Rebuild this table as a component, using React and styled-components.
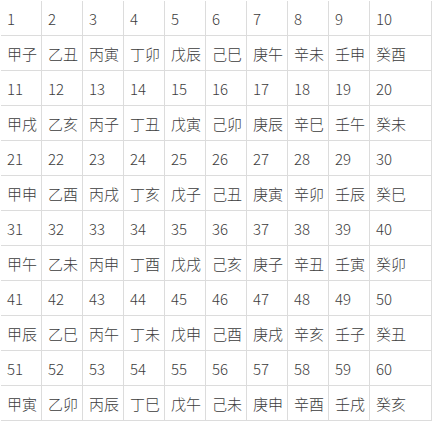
import React from "react";
import styled, { createGlobalStyle } from "styled-components";

const Global = createGlobalStyle`
  html, body { margin: 0; padding: 0; background: #fff; }
  body { font-family: "Noto Sans CJK SC", "Noto Sans", sans-serif; }
`;

const Table = styled.div`
  display: grid;
  grid-template-columns: repeat(9, 41px) 1fr;
  grid-auto-rows: 35px;
  width: 432px;
  box-sizing: border-box;
  padding: 1px 0 0 1px;
`;

const Cell = styled.div`
  box-sizing: border-box;
  border-right: 1px solid #dcdcdc;
  border-bottom: 1px solid #dcdcdc;
  display: flex;
  align-items: center;
  padding-left: 6px;
  font-size: 15px;
  font-weight: 300;
  color: #3c3c3c;
  white-space: nowrap;
  overflow: hidden;
`;

const stems = "甲乙丙丁戊己庚辛壬癸";
const branches = "子丑寅卯辰巳午未申酉戌亥";

const rows = [];
for (let r = 0; r < 6; r++) {
  const nums = [];
  const names = [];
  for (let c = 0; c < 10; c++) {
    const i = r * 10 + c;
    nums.push(String(i + 1));
    names.push(stems[i % 10] + branches[i % 12]);
  }
  rows.push(nums, names);
}

export default function App() {
  return (
    <>
      <Global />
      <Table>
        {rows.flatMap((row, ri) =>
          row.map((t, ci) => <Cell key={ri + "-" + ci}>{t}</Cell>)
        )}
      </Table>
    </>
  );
}
